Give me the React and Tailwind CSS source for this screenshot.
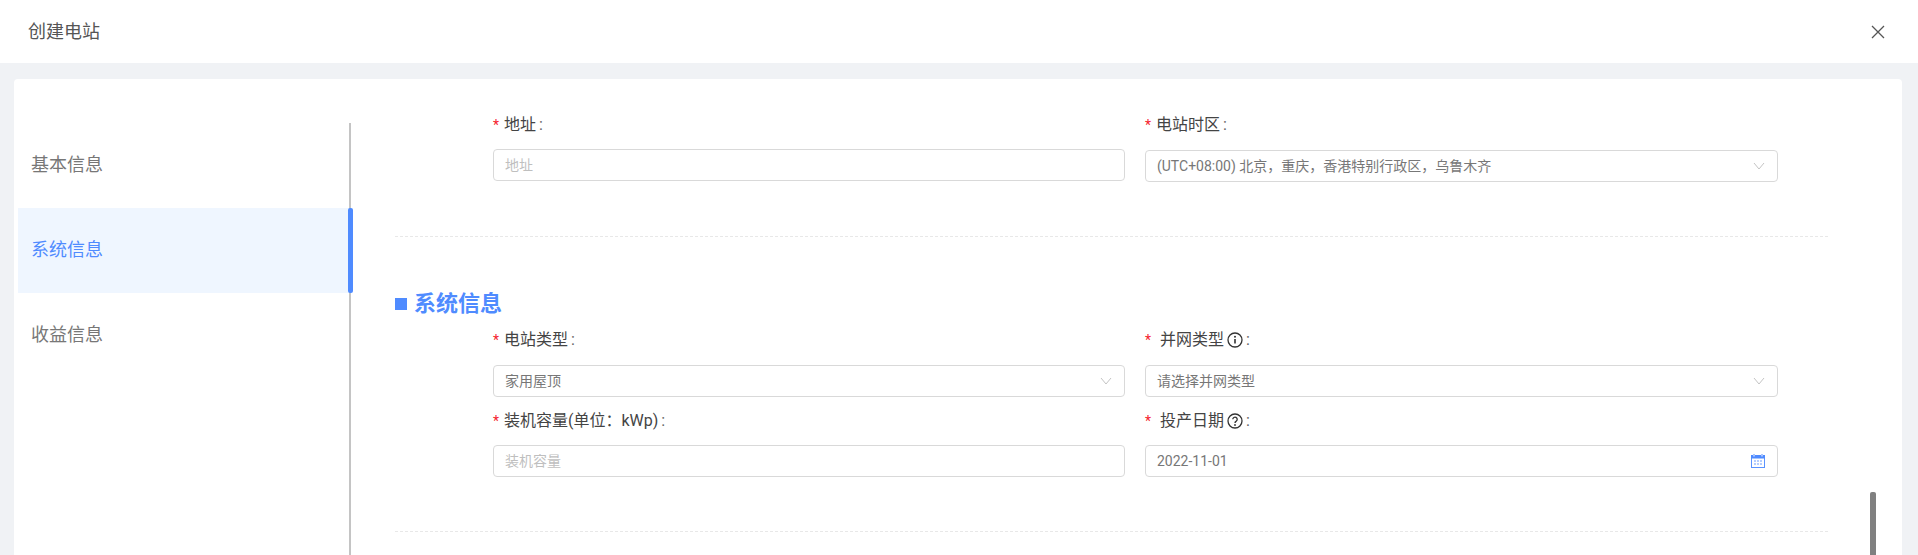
import React from "react";

const Chevron = () => (
  <svg width="12" height="8" viewBox="0 0 12 8" fill="none" stroke="#c4c4c4" strokeWidth="1" className="shrink-0">
    <path d="M1 1l5 6 5-6" />
  </svg>
);

const Info = () => (
  <svg width="16" height="16" viewBox="0 0 16 16" fill="none" stroke="#333" strokeWidth="1.3" className="ml-[3px] shrink-0">
    <circle cx="8" cy="8" r="7" />
    <path d="M8 7v4.6" strokeWidth="1.6" />
    <circle cx="8" cy="4.8" r="1" fill="#333" stroke="none" />
  </svg>
);

const Help = () => (
  <svg width="16" height="16" viewBox="0 0 16 16" fill="none" stroke="#333" strokeWidth="1.3" className="ml-[3px] shrink-0">
    <circle cx="8" cy="8" r="7" />
    <path d="M5.8 6.3a2.2 2.2 0 1 1 3.5 1.8c-.8.5-1.3 1-1.3 1.9" />
    <circle cx="8" cy="12" r="0.9" fill="#333" stroke="none" />
  </svg>
);

const Calendar = () => (
  <svg width="14" height="14" viewBox="0 0 14 14" className="shrink-0">
    <rect x="0.5" y="1.5" width="13" height="12" fill="#fff" stroke="#5b93ff" />
    <rect x="0" y="1" width="14" height="3.5" fill="#4f8bff" />
    <rect x="2" y="0" width="2" height="2.5" fill="#a9c6ff" />
    <rect x="10" y="0" width="2" height="2.5" fill="#a9c6ff" />
    <path d="M3 7h2M6 7h2M9 7h2M3 10h2M6 10h2M9 10h2" stroke="#6c9dff" strokeWidth="1" />
  </svg>
);

const Label = ({ children, spaced, icon, className = "" }) => (
  <div className={`flex items-center h-[24px] text-[16px] text-[#444] ${className}`}>
    <span className={`text-[#f5222d] text-[14px] w-[11px] ${spaced ? "mr-[4px]" : ""}`}>*</span>
    <span>{children}</span>
    {icon}
    <span className="ml-[3px] text-[#666]">:</span>
  </div>
);

const Field = ({ value, placeholder, right, className = "" }) => (
  <div className={`flex items-center justify-between h-[32px] border border-[#d9d9d9] rounded-[4px] bg-white pl-[11px] pr-[12px] text-[14px] ${className}`}>
    <span className={placeholder ? "text-[#bfbfbf]" : "text-[#777]"}>{placeholder || value}</span>
    {right}
  </div>
);

const NavItem = ({ children, active }) => (
  <div className={`relative flex items-center h-[85px] pl-[13px] pb-[2px] text-[18px] ${active ? "bg-[#eff6ff] text-[#4f8bff]" : "text-[#777]"}`}>
    {children}
    {active && <span className="absolute top-0 bottom-0 right-[-4px] w-[5px] rounded-[2px] bg-[#4f8bff]" />}
  </div>
);

export default function App() {
  return (
    <div className="h-[555px] overflow-hidden flex flex-col bg-[#f0f2f5] font-['Roboto','Noto_Sans_CJK_SC',sans-serif]">
      <header className="h-[63px] shrink-0 bg-white flex items-center justify-between pl-[28px] pr-[33px]">
        <h1 className="text-[18px] font-normal text-[#555]">创建电站</h1>
        <svg width="14" height="14" viewBox="0 0 14 14" stroke="#555" strokeWidth="1.3" fill="none">
          <path d="M1 1l12 12M13 1L1 13" />
        </svg>
      </header>

      <main className="relative flex-1 min-h-0 mt-[16px] ml-[14px] mr-[16px] bg-white rounded-t-[4px] flex overflow-hidden">
        <aside className="w-[333px] ml-[4px] mt-[44px] shrink-0 border-r-2 border-[#c4c4c4]">
          <NavItem>基本信息</NavItem>
          <NavItem active>系统信息</NavItem>
          <NavItem>收益信息</NavItem>
        </aside>

        <div className="ml-[44px] w-[1433px] shrink-0 pt-[34px]">
          <div className="pl-[98px] grid grid-cols-[632px_633px] gap-x-[20px] pb-[54px] border-b border-dashed border-[#e8e8e8]">
            <div>
              <Label className="mb-[12px]">地址</Label>
              <Field placeholder="地址" />
            </div>
            <div>
              <Label className="mb-[13px]">电站时区</Label>
              <Field value="(UTC+08:00) 北京，重庆，香港特别行政区，乌鲁木齐" right={<Chevron />} />
            </div>
          </div>

          <div className="mt-[51px] flex items-center h-[32px] pb-[2px] text-[22px] font-bold text-[#4f8bff]">
            <span className="w-[12px] h-[12px] bg-[#4f8bff] mt-[2px] mr-[7px]" />
            系统信息
          </div>

          <div className="pl-[98px] grid grid-cols-[632px_633px] gap-x-[20px] mt-[8px] pb-[54px] border-b border-dashed border-[#e8e8e8]">
            <div>
              <Label className="mb-[13px]">电站类型</Label>
              <Field value="家用屋顶" right={<Chevron />} />
            </div>
            <div>
              <Label spaced icon={<Info />} className="mb-[13px]">并网类型</Label>
              <Field value="请选择并网类型" right={<Chevron />} />
            </div>
            <div className="mt-[12px]">
              <Label className="mb-[12px]">装机容量(单位：kWp)</Label>
              <Field placeholder="装机容量" />
            </div>
            <div className="mt-[12px]">
              <Label spaced icon={<Help />} className="mb-[12px]">投产日期</Label>
              <Field value="2022-11-01" right={<Calendar />} />
            </div>
          </div>
        </div>

        <span className="absolute left-[1856px] top-[413px] w-[6px] h-[100px] rounded-t-[2px] bg-[#808080]" />
      </main>
    </div>
  );
}
